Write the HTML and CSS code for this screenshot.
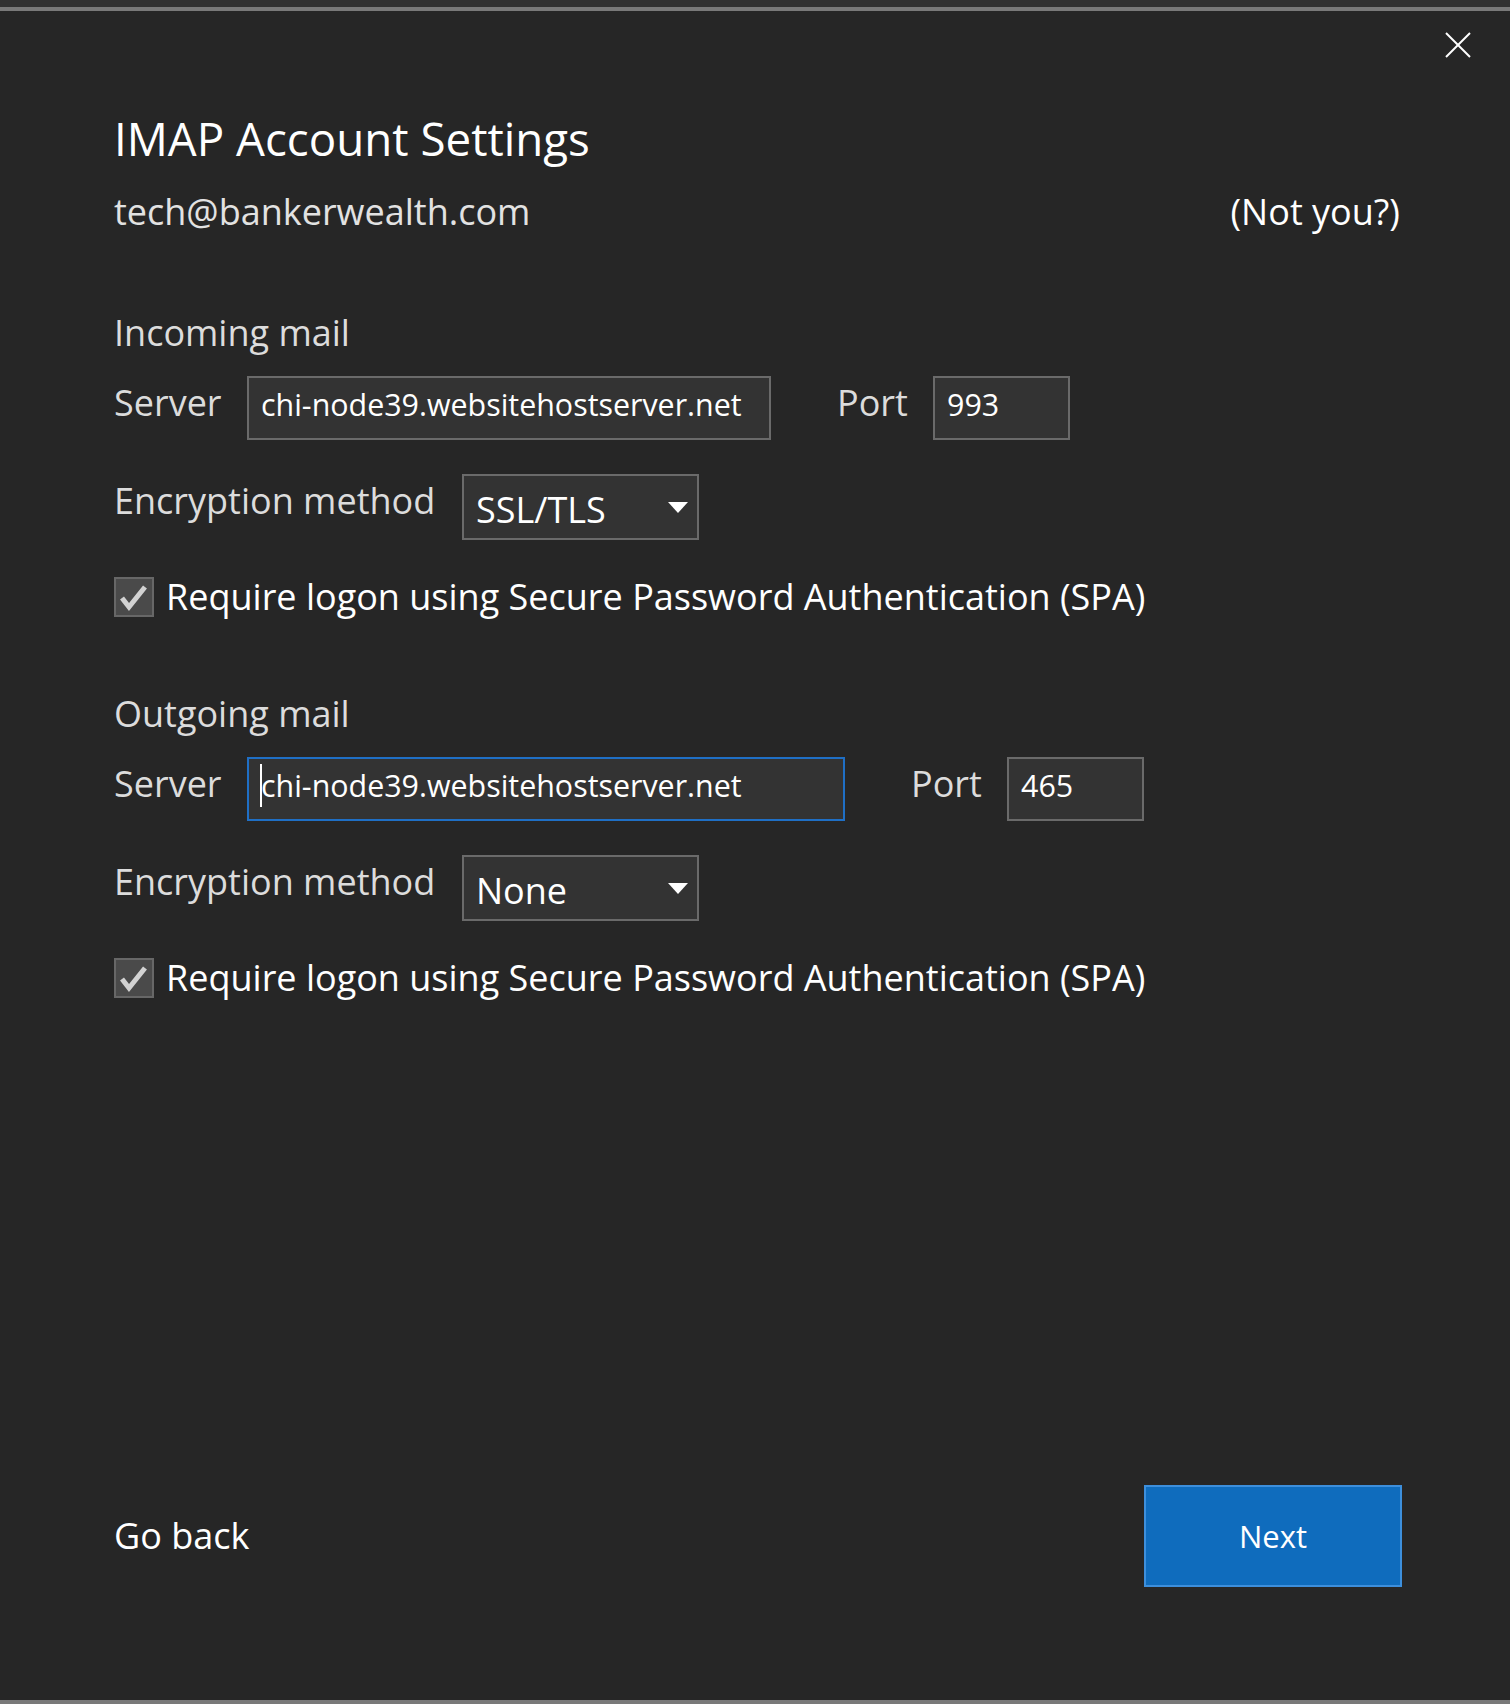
FILE: index.html
```html
<!DOCTYPE html>
<html lang="en">
<head>
    <meta charset="UTF-8">
    <meta name="viewport" content="width=device-width, initial-scale=1.0">
    <title>IMAP Account Settings</title>
    <link rel="stylesheet" href="styles.css">
</head>
<body>
    <div class="window">
        <div class="topbar"></div>

        <!-- Close button -->
        <div class="close-row">
            <button class="close" aria-label="Close">
                <svg width="26" height="26" viewBox="0 0 26 26">
                    <line x1="1" y1="1" x2="25" y2="25" />
                    <line x1="25" y1="1" x2="1" y2="25" />
                </svg>
            </button>
        </div>

        <main class="content">
            <h1 class="title">IMAP Account Settings</h1>
            <div class="account-row">
                <span class="account">tech@bankerwealth.com</span>
                <a class="not-you" href="#">(Not you?)</a>
            </div>

            <!-- Incoming mail -->
            <section class="mail-section">
                <h2 class="section-title">Incoming mail</h2>
                <div class="field-row">
                    <label class="field-label">Server</label>
                    <div class="field field-server">chi-node39.websitehostserver.net</div>
                    <label class="port-label">Port</label>
                    <div class="field field-port">993</div>
                </div>
                <div class="select-row">
                    <label class="select-label">Encryption method</label>
                    <div class="select">
                        <span class="select-value">SSL/TLS</span>
                        <svg class="select-arrow" width="20" height="11" viewBox="0 0 20 11"><polygon points="0,0 20,0 10,11" /></svg>
                    </div>
                </div>
                <div class="check-row">
                    <span class="checkbox">
                        <svg width="40" height="40" viewBox="0 0 40 40"><polyline points="8,21 15,30 31,10" /></svg>
                    </span>
                    <span class="check-text">Require logon using Secure Password Authentication (SPA)</span>
                </div>
            </section>

            <!-- Outgoing mail -->
            <section class="mail-section">
                <h2 class="section-title">Outgoing mail</h2>
                <div class="field-row">
                    <label class="field-label">Server</label>
                    <div class="field field-server wide focused"><span class="caret"></span>chi-node39.websitehostserver.net</div>
                    <label class="port-label">Port</label>
                    <div class="field field-port">465</div>
                </div>
                <div class="select-row">
                    <label class="select-label">Encryption method</label>
                    <div class="select">
                        <span class="select-value">None</span>
                        <svg class="select-arrow" width="20" height="11" viewBox="0 0 20 11"><polygon points="0,0 20,0 10,11" /></svg>
                    </div>
                </div>
                <div class="check-row">
                    <span class="checkbox">
                        <svg width="40" height="40" viewBox="0 0 40 40"><polyline points="8,21 15,30 31,10" /></svg>
                    </span>
                    <span class="check-text">Require logon using Secure Password Authentication (SPA)</span>
                </div>
            </section>
        </main>

        <footer class="footer">
            <a class="go-back" href="#">Go back</a>
            <button class="next">Next</button>
        </footer>

        <div class="bottombar"></div>
    </div>
</body>
</html>
```

FILE: styles.css
```css
* {
    margin: 0;
    padding: 0;
    box-sizing: border-box;
}

body {
    font-family: 'Open Sans', 'Noto Sans', sans-serif;
    background: #262626;
    color: #ffffff;
    overflow: hidden;
}

.window {
    display: flex;
    flex-direction: column;
    min-height: 100vh;
    background: #262626;
}

.topbar {
    height: 11px;
    background: #313131;
    border-bottom: 4px solid #797979;
}

.close-row {
    display: flex;
    justify-content: flex-end;
    padding: 21px 39px 0 0;
}

.close {
    width: 26px;
    height: 26px;
    background: none;
    border: 0;
    cursor: pointer;
}

.close svg {
    display: block;
}

.close line {
    stroke: #ffffff;
    stroke-width: 2;
}

.content {
    display: flex;
    flex-direction: column;
    padding: 0 110px 0 114px;
}

.title {
    margin-top: 52px;
    font-size: 45.7px;
    line-height: 56px;
    font-weight: 400;
    color: #ffffff;
}

.account-row {
    display: flex;
    justify-content: space-between;
    margin-top: 24px;
    font-size: 36px;
    line-height: 44px;
}

.account {
    color: #e2e2e2;
}

.not-you {
    color: #ffffff;
    text-decoration: none;
}

.mail-section {
    margin-top: 77px;
}

.mail-section + .mail-section {
    margin-top: 75px;
}

.section-title {
    margin-bottom: 21px;
    font-size: 36px;
    line-height: 44px;
    font-weight: 400;
    color: #dcdcdc;
}

/* server + port row */
.field-row {
    display: flex;
    align-items: baseline;
}

.field-label,
.port-label,
.select-label {
    font-size: 36px;
    line-height: 44px;
    color: #dcdcdc;
}

.field-label {
    flex: 0 0 133px;
}

.port-label {
    flex: 0 0 96px;
    margin-left: 66px;
}

.field {
    position: relative;
    display: flex;
    align-items: center;
    height: 64px;
    padding: 0 12px 6px;
    background: #333333;
    border: 2px solid #6a6a6a;
    font-size: 30.4px;
    line-height: 40px;
    color: #ffffff;
}

.field-server {
    width: 524px;
}

.field-server.wide {
    width: 598px;
}

.field-port {
    width: 137px;
}

.field.focused {
    border-color: #1f6fc5;
}

.caret {
    position: absolute;
    left: 11px;
    top: 5px;
    width: 2px;
    height: 43px;
    background: #ffffff;
}

/* encryption dropdown */
.select-row {
    display: flex;
    align-items: center;
    margin-top: 34px;
}

.select-label {
    flex: 0 0 348px;
    margin-bottom: 12px;
}

.select {
    display: flex;
    align-items: center;
    justify-content: space-between;
    width: 237px;
    height: 66px;
    padding: 0 9px 0 12px;
    background: #333333;
    border: 2px solid #6a6a6a;
}

.select-value {
    padding-top: 6px;
    font-size: 36px;
    line-height: 44px;
    color: #ffffff;
}

.select-arrow polygon {
    fill: #ffffff;
}

/* checkbox */
.check-row {
    display: flex;
    align-items: center;
    margin-top: 37px;
}

.checkbox {
    width: 40px;
    height: 40px;
    margin-right: 12px;
    background: #4a4a4a;
    border: 2px solid #676767;
}

.checkbox svg {
    display: block;
    margin: -2px;
}

.checkbox polyline {
    fill: none;
    stroke: #d2d2d2;
    stroke-width: 5;
}

.check-text {
    font-size: 36px;
    line-height: 40px;
    color: #ffffff;
}

/* footer */
.footer {
    display: flex;
    justify-content: space-between;
    align-items: center;
    margin-top: auto;
    padding: 0 108px 113px 114px;
}

.go-back {
    font-size: 36px;
    line-height: 44px;
    color: #ffffff;
    text-decoration: none;
}

.next {
    width: 258px;
    height: 102px;
    background: #0f6cbd;
    border: 2px solid #3d8fdc;
    font-family: inherit;
    font-size: 31px;
    color: #ffffff;
    cursor: pointer;
}

.bottombar {
    height: 4px;
    background: #797979;
}
```
